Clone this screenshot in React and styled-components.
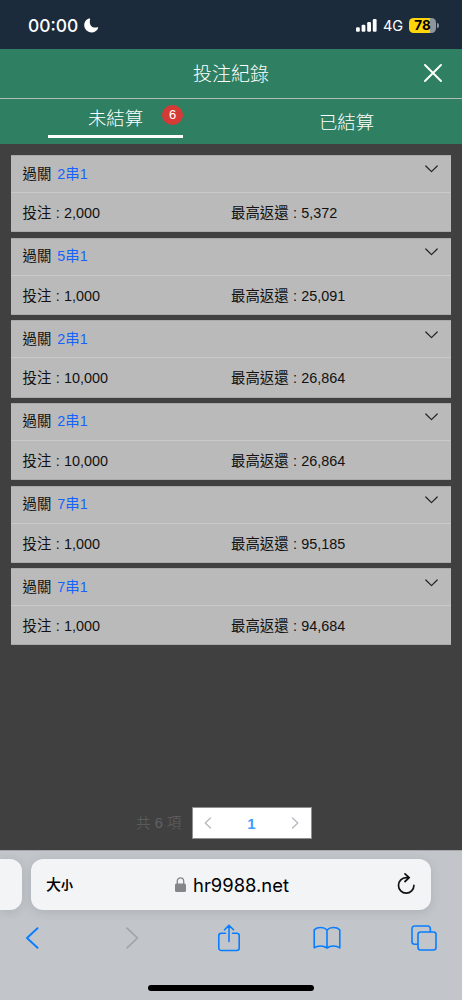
import React from 'react';
import styled, { createGlobalStyle } from 'styled-components';

const GlobalStyle = createGlobalStyle`
  * { box-sizing: border-box; }
  body {
    margin: 0;
    background: #404040;
    font-family: "Liberation Sans", "Noto Sans CJK TC", sans-serif;
  }
  button { border: 0; padding: 0; margin: 0; background: none; font: inherit; color: inherit; }
  svg { display: block; flex: none; }
`;

const Screen = styled.div`
  width: 462px;
  height: 1000px;
  display: flex;
  flex-direction: column;
  overflow: hidden;
  background: #404040;
`;

const StatusBar = styled.header`
  height: 49px;
  flex: none;
  display: flex;
  align-items: center;
  justify-content: space-between;
  padding: 2px 26px 0 28px;
  background: #1b2b3c;
  color: #fff;
  font-family: Inter, sans-serif;
`;

const StatusGroup = styled.div`
  display: flex;
  align-items: center;
`;

const Clock = styled.span`
  width: 56px;
  font-size: 17.4px;
  font-weight: 550;
  line-height: 20px;
`;

const Network = styled.span`
  width: 26px;
  margin-left: 6px;
  font-size: 14.5px;
  line-height: 18px;
`;

const Battery = styled.span`
  position: relative;
  width: 27px;
  height: 15px;
  border-radius: 4.5px;
  background: linear-gradient(to right, #ffd60a 21.5px, #8d959d 21.5px);
  color: #000;
  font-size: 13.5px;
  font-weight: 700;
  line-height: 15px;
  text-align: center;
  &::after {
    content: "";
    position: absolute;
    right: -2.5px;
    top: 5px;
    width: 1.5px;
    height: 5px;
    border-radius: 0 2px 2px 0;
    background: #8d959d;
  }
`;

const TitleBar = styled.div`
  height: 50px;
  flex: none;
  display: grid;
  grid-template-columns: 60px 1fr 60px;
  align-items: center;
  background: #2f8063;
  border-bottom: 1px solid #b2bbb7;
  color: #fff;
`;

const Title = styled.h1`
  grid-column: 2;
  margin: 0;
  padding-top: 2px;
  font-size: 19px;
  font-weight: 300;
  line-height: 28px;
  text-align: center;
`;

const CloseButton = styled.button`
  justify-self: center;
  margin: -2px 0 0 1px;
`;

const Tabs = styled.nav`
  height: 45px;
  flex: none;
  display: grid;
  grid-template-columns: 1fr 1fr;
  background: #2f8063;
  color: #fff;
`;

const Tab = styled.button`
  position: relative;
  width: 135px;
  height: ${(p) => (p.$active ? '39px' : '45px')};
  justify-self: center;
  border-bottom: ${(p) => (p.$active ? '3px solid #fff' : '0')};
  font-size: 18.4px;
  font-weight: 300;
  line-height: ${(p) => (p.$active ? '40px' : '47px')};
  text-align: center;
`;

const Badge = styled.span`
  position: absolute;
  top: 6px;
  right: 0;
  width: 21px;
  height: 20px;
  border-radius: 50%;
  background: #d63a35;
  font-size: 13px;
  font-weight: 400;
  line-height: 20px;
`;

const Content = styled.main`
  flex: 1;
  display: flex;
  flex-direction: column;
  justify-content: space-between;
  padding: 11px 11px 11px;
`;

const BetList = styled.div`
  display: flex;
  flex-direction: column;
  gap: 5.4px;
`;

const BetCard = styled.article`
  height: 77.25px;
  border: 1px solid #a9a9a9;
  border-width: 1px 0;
  background: #bababa;
  color: #111;
  font-size: 14.4px;
`;

const BetHeader = styled.div`
  height: 37px;
  display: flex;
  align-items: center;
  justify-content: space-between;
  padding: 0 13px 1px 11.5px;
  border-bottom: 1px solid #c9c9c9;
  line-height: 22px;
`;

const Combo = styled.span`
  margin-left: 6px;
  color: #1463ff;
`;

const ChevronBox = styled.button`
  align-self: flex-start;
  margin-top: 9.3px;
`;

const BetDetails = styled.div`
  height: 38px;
  display: grid;
  grid-template-columns: 208.5px 1fr;
  align-items: center;
  padding: 2px 11.5px 0;
  line-height: 22px;
  word-spacing: 0.4px;
`;

const Pagination = styled.div`
  display: flex;
  align-items: center;
  padding-left: 125px;
  gap: 11px;
`;

const Total = styled.span`
  color: #606266;
  font-size: 14.6px;
  font-weight: 300;
  line-height: 22px;
`;

const Pager = styled.div`
  width: 120px;
  height: 32px;
  display: grid;
  grid-template-columns: 30px 1fr 32px;
  place-items: center;
  border: 1px solid #8f8f8f;
  background: #fff;
`;

const PageNumber = styled.span`
  color: #409eff;
  font-size: 15px;
  font-weight: 700;
`;

const BrowserBar = styled.footer`
  height: 150px;
  flex: none;
  display: flex;
  flex-direction: column;
  align-items: center;
  overflow: hidden;
  border-top: 1px solid #a5a7aa;
  background: #c2c6cb;
`;

const AddressRow = styled.div`
  width: 462px;
  height: 60px;
  display: flex;
  gap: 9px;
  padding-top: 8px;
`;

const AddressBox = styled.div`
  width: 400px;
  height: 51px;
  flex: none;
  display: grid;
  grid-template-columns: 60px 1fr 60px;
  align-items: center;
  border-radius: 12px;
  background: #f3f4f6;
  box-shadow: 0 2px 10px rgba(60, 70, 80, 0.16);
  color: #000;
`;

const PreviousTab = styled(AddressBox)`
  width: 22px;
  border-radius: 0 12px 12px 0;
`;

const TextSize = styled.button`
  display: flex;
  align-items: baseline;
  padding-left: 15px;
  font-family: "Noto Sans CJK TC", sans-serif;
  font-size: 15px;
  font-weight: 500;
  line-height: 24px;
`;

const SmallGlyph = styled.span`
  font-size: 12px;
  font-weight: 700;
`;

const Address = styled.div`
  display: flex;
  align-items: center;
  justify-content: center;
  gap: 7px;
  padding-left: 2px;
  font-family: Inter, sans-serif;
  font-size: 18.4px;
  line-height: 24px;
`;

const Toolbar = styled.div`
  width: 462px;
  height: 52px;
  display: grid;
  grid-template-columns: 64px 136px 58px 137px 58px;
  align-items: center;
  justify-items: center;
  padding-top: 1px;
`;

const HomeIndicator = styled.div`
  width: 166px;
  height: 6px;
  margin-top: 22px;
  border-radius: 3px;
  background: #000;
`;

const Stroke = ({ w, h, color = 'currentColor', width = 1.6, children }) => (
  <svg width={w} height={h} viewBox={`0 0 ${w} ${h}`} fill="none" stroke={color}
    strokeWidth={width} strokeLinecap="round" strokeLinejoin="round">
    {children}
  </svg>
);

const bets = [
  { combo: '2串1', stake: '2,000', payout: '5,372' },
  { combo: '5串1', stake: '1,000', payout: '25,091' },
  { combo: '2串1', stake: '10,000', payout: '26,864' },
  { combo: '2串1', stake: '10,000', payout: '26,864' },
  { combo: '7串1', stake: '1,000', payout: '95,185' },
  { combo: '7串1', stake: '1,000', payout: '94,684' },
];

export default function App() {
  return (
    <>
      <GlobalStyle />
      <Screen>
        <StatusBar>
          <StatusGroup>
            <Clock>00:00</Clock>
            <svg width="15" height="15" viewBox="0 0 15 15" fill="#fff">
              <path d="M4.800.6C2 1.700.200 4.200.200 7.100c0 4.100 3.200 7.300 7.400 7.300 3 0 5.400-1.600 6.500-4.200.3-.8-.1-1.100-.9-.9-.7.200-1.300.3-2 .3-3.300 0-5.400-2.200-5.400-5.600 0-.8.100-1.500.3-2.200C6.300.800 5.700.200 4.800.6Z" />
            </svg>
          </StatusGroup>
          <StatusGroup>
            <svg width="21" height="13" viewBox="0 0 21 13" fill="#fff">
              <rect x="0" y="8.200" width="3.800" height="4.600" rx="1.200" />
              <rect x="5.600" y="5.800" width="3.800" height="7" rx="1.200" />
              <rect x="11.200" y="3" width="3.800" height="9.800" rx="1.200" />
              <rect x="16.800" y="0" width="3.800" height="12.800" rx="1.200" />
            </svg>
            <Network>4G</Network>
            <Battery>78</Battery>
          </StatusGroup>
        </StatusBar>

        <TitleBar>
          <Title>投注紀錄</Title>
          <CloseButton aria-label="關閉">
            <Stroke w={18} h={18} width={1.900}>
              <path d="M1 1 17 17M17 1 1 17" />
            </Stroke>
          </CloseButton>
        </TitleBar>

        <Tabs>
          <Tab $active>未結算<Badge>6</Badge></Tab>
          <Tab>已結算</Tab>
        </Tabs>

        <Content>
          <BetList>
            {bets.map((bet, i) => (
              <BetCard key={i}>
                <BetHeader>
                  <span>過關<Combo>{bet.combo}</Combo></span>
                  <ChevronBox aria-label="展開">
                    <Stroke w={13} h={8} width={1.200} color="#222">
                      <path d="M.8 1 6.500 6.600 12.200 1" />
                    </Stroke>
                  </ChevronBox>
                </BetHeader>
                <BetDetails>
                  <span>投注 : {bet.stake}</span>
                  <span>最高返還 : {bet.payout}</span>
                </BetDetails>
              </BetCard>
            ))}
          </BetList>

          <Pagination>
            <Total>共 6 項</Total>
            <Pager>
              <Stroke w={8} h={12} width={1.300} color="#b4b8c0"><path d="M6.500 1 1.200 6 6.500 11" /></Stroke>
              <PageNumber>1</PageNumber>
              <Stroke w={8} h={12} width={1.300} color="#b4b8c0"><path d="M1.500 1 6.800 6 1.500 11" /></Stroke>
            </Pager>
          </Pagination>
        </Content>

        <BrowserBar>
          <AddressRow>
            <PreviousTab />
            <AddressBox>
              <TextSize>大<SmallGlyph>小</SmallGlyph></TextSize>
              <Address>
                <svg width="11" height="15" viewBox="0 0 11 15">
                  <rect x="0" y="6.500" width="11" height="8.500" rx="1.500" fill="#85868a" />
                  <path d="M2.300 7V4a3.200 3.200 0 0 1 6.400 0v3" fill="none" stroke="#85868a" strokeWidth="1.300" />
                </svg>
                <span>hr9988.net</span>
              </Address>
              <Stroke w={60} h={24} width={1.700} color="#111">
                <path d="M37.500 4.700H35.200A7.700 7.700 0 1 0 42.900 12.400M34 .9l4.200 3.800-4.200 3.800" />
              </Stroke>
            </AddressBox>
          </AddressRow>
          <Toolbar>
            <Stroke w={16} h={22} width={1.900} color="#087dff"><path d="M13.500 1.200 3 11l10.500 9.800" /></Stroke>
            <Stroke w={16} h={22} width={1.700} color="#a0a4a9"><path d="M3 1.200 13.500 11 3 20.800" /></Stroke>
            <Stroke w={24} h={28} width={1.600} color="#087dff">
              <path d="M8.500 9.300H4.300A2.500 2.500 0 0 0 1.800 11.800v12.200A2.500 2.500 0 0 0 4.300 26.500h15.400a2.500 2.500 0 0 0 2.500-2.500V11.800A2.500 2.500 0 0 0 19.700 9.300h-4.200M12 17.500V1.500M7.500 5.800 12 1.200l4.500 4.600" />
            </Stroke>
            <Stroke w={28} h={24} width={1.600} color="#087dff">
              <path d="M14 4C11 .8 4.500.8 1.200 3.800v18c3.500-2.500 9.300-2.500 12.800.2 3.500-2.700 9.300-2.700 12.800-.2v-18C23.500.8 17 .8 14 4v18" />
            </Stroke>
            <Stroke w={26} h={26} width={1.600} color="#087dff">
              <rect x="7" y="7" width="18" height="18" rx="2.500" />
              <path d="M6.500 19.300H3.500a2.500 2.500 0 0 1-2.500-2.500V3.500a2.500 2.500 0 0 1 2.500-2.500h13.300a2.500 2.500 0 0 1 2.500 2.500v3" />
            </Stroke>
          </Toolbar>
          <HomeIndicator />
        </BrowserBar>
      </Screen>
    </>
  );
}
